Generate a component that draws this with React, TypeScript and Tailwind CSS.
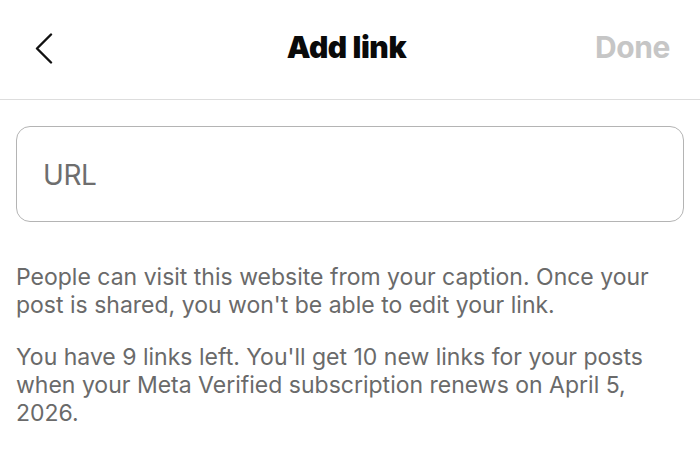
export default function App() {
  return (
    <div className="w-[700px] h-[458px] bg-white overflow-hidden font-['Inter',sans-serif]">
      {/* header */}
      <div className="h-[100px] flex items-center justify-between pl-[35px] pr-[30px] border-b border-[#dddddd]">
        <svg width="18" height="31" viewBox="0 0 18 31" className="mt-[-3px]">
          <path d="M16 1.5 L2 15.5 L16 29.5" fill="none" stroke="#111" strokeWidth="2.4" strokeLinecap="round" strokeLinejoin="round" />
        </svg>
        <div className="text-[30px] font-black text-[#0a0a0a] tracking-[-0.4px] ml-[45px] mt-[-4px]">Add link</div>
        <div className="text-[30px] font-bold text-[#c6c6c6] tracking-[-0.4px] mt-[-4px]">Done</div>
      </div>

      <div className="px-4 pt-[26px]">
        <div className="h-[96px] rounded-[14px] border-[1.5px] border-[#b4b4b4] flex items-center px-[26px]">
          <span className="text-[28px] text-[#6e6e6e] tracking-[-0.4px] mt-[1px]">URL</span>
        </div>

        <div className="mt-[41px] text-[23px] leading-[28px] text-[#6a6a6a] tracking-[0px]">
          <p>People can visit this website from your caption. Once your post is shared, you won't be able to edit your link.</p>
          <p className="mt-[24px]">
            You have 9 links left. You'll get 10 new links for your posts when your Meta Verified subscription renews on April 5, 2026.
          </p>
        </div>
      </div>
    </div>
  );
}
